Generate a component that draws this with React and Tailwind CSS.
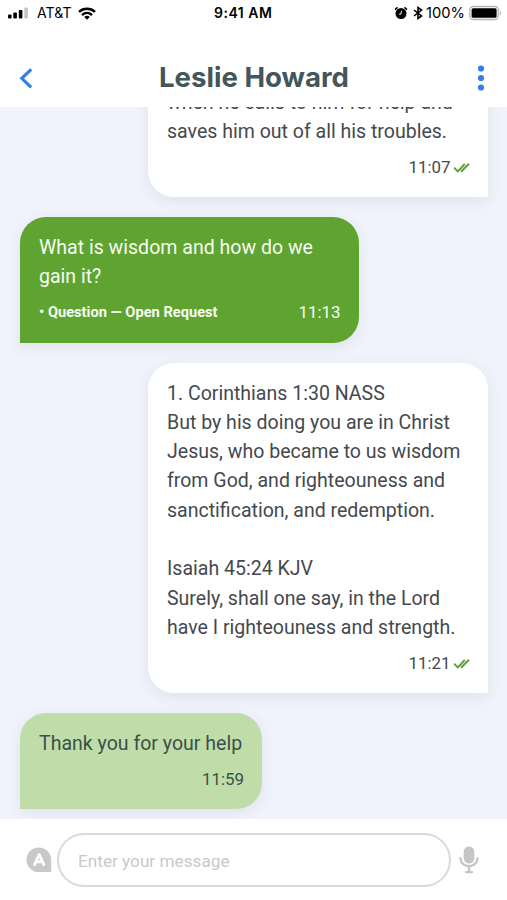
function StatusBar() {
  return (
    <div className="flex h-[26px] shrink-0 items-center font-['Inter','Liberation_Sans',sans-serif] text-black">
      <div className="flex w-[214px] items-center pl-[8px]">
        <svg className="h-[12px] w-[21px]" viewBox="0 0 21 12">
          <rect x="0" y="7.500" width="3.600" height="4" rx="1" />
          <rect x="5.300" y="5.500" width="3.600" height="6" rx="1" />
          <rect x="10.800" y="3" width="3.600" height="8.500" rx="1" />
          <rect x="16.300" y="0.500" width="3.600" height="11" rx="1" fill="#c4c4c4" />
        </svg>
        <span className="ml-[8px] w-[37px] whitespace-nowrap text-[14px] leading-none tracking-[0.100px]">AT&amp;T</span>
        <svg className="ml-[4px] h-[13px] w-[18px]" viewBox="0 0 18 13">
          <g fill="none" stroke="#000" strokeWidth="2.500">
            <path d="M1 4.800C5.500.600 12.500.600 17 4.800" />
            <path d="M4 8.100c2.900-2.700 7.100-2.700 10 0" />
          </g>
          <path d="M6.200 9.900c1.700-1.400 3.900-1.400 5.600 0L9 12.800z" />
        </svg>
      </div>
      <span className="w-[62px] whitespace-nowrap text-[14px] font-semibold leading-none tracking-[0.500px]">9:41 AM</span>
      <div className="ml-auto flex items-center pr-[5px]">
        <svg className="h-[14px] w-[14px]" viewBox="0 0 14 14">
          <circle cx="7" cy="7.500" r="5.500" />
          <path d="M1 3.600 3.500 1.400M13 3.600 10.500 1.400" stroke="#000" strokeWidth="1.500" />
          <path d="M7.600 4.800 6.800 8.200H5" fill="none" stroke="#fff" strokeWidth="1" />
        </svg>
        <svg className="ml-[5px] h-[14px] w-[10px]" viewBox="0 0 10 14" fill="none" stroke="#000" strokeWidth="1.600">
          <path d="M1 4l7.500 6L5 12.500V1.500L8.500 4 1 10" />
        </svg>
        <span className="ml-[3px] w-[39px] whitespace-nowrap pt-[1px] text-[14.700px] leading-none">100%</span>
        <svg className="ml-[4px] h-[16px] w-[33px]" viewBox="0 0 33 16">
          <rect x="0.800" y="1.500" width="28.500" height="13" rx="3.500" fill="#fff" stroke="#b5b5b5" strokeWidth="1.300" />
          <rect x="2.600" y="3.300" width="25" height="9.400" rx="1.500" />
          <path d="M30.800 5.500c1.600.6 1.600 4.400 0 5z" fill="#b5b5b5" />
        </svg>
      </div>
    </div>
  );
}

function Header() {
  return (
    <header className="flex h-[81px] shrink-0 items-center bg-white pb-[1px] pt-[23px]">
      <svg className="ml-[18px] h-[24px] w-[16px]" viewBox="0 0 16 24" fill="none" stroke="#2f80ed" strokeWidth="3.200">
        <path d="M13.200 3.300 3.800 12.300l9.400 9" />
      </svg>
      <h1 className="flex-1 whitespace-nowrap pl-[125px] font-['Inter','Liberation_Sans',sans-serif] text-[27.600px] font-bold leading-none text-[#43565b]">
        Leslie Howard
      </h1>
      <svg className="mr-[21px] h-[28px] w-[10px]" viewBox="0 0 10 28" fill="#2f80ed">
        <circle cx="5" cy="4.500" r="3.100" />
        <circle cx="5" cy="14" r="3.100" />
        <circle cx="5" cy="23.500" r="3.100" />
      </svg>
    </header>
  );
}

function ReadTicks() {
  return (
    <svg className="ml-[2px] h-[12px] w-[17px]" viewBox="0 0 17 12" fill="none" stroke="#5ea532" strokeWidth="2">
      <path d="M1.200 5.800 4.800 9.400 11.800 2M8 9.800 16 1.800" />
    </svg>
  );
}

function Bubble({ lines, className, time, tag, read }) {
  return (
    <article className={"flex shrink-0 flex-col pl-[19px] pt-[15.500px] shadow-[0_4px_14px_rgba(60,70,90,0.09)] " + className}>
      {lines.map((line, i) => (
        <p key={i} className="h-[29.300px] whitespace-nowrap text-[19.550px] leading-[29.300px]">{line}</p>
      ))}
      <div className="mt-[10.700px] flex h-[22px] items-center">
        {tag && <span className="whitespace-nowrap pt-[1px] text-[14.650px] font-bold">{tag}</span>}
        <time className="ml-auto text-[16.900px]">{time}</time>
        {read && <ReadTicks />}
      </div>
    </article>
  );
}

function Composer() {
  return (
    <footer className="flex h-[81px] shrink-0 items-start bg-white pt-[14px]">
      <svg className="ml-[26px] mt-[14px] h-[26px] w-[26px]" viewBox="0 0 26 26">
        <path d="M12.800.5a12.300 12.300 0 0 0 0 24.600H25.200V12.800A12.300 12.300 0 0 0 12.800.5z" fill="#c8c8cb" />
        <path d="M8.600 17.500 13.200 7.500l4.600 10M10.300 14.800h5.800" fill="none" stroke="#fff" strokeWidth="2.900" strokeLinecap="round" strokeLinejoin="round" />
      </svg>
      <div className="ml-[5px] flex h-[54px] w-[394px] items-center rounded-full border-2 border-[#dadada] pl-[19px] pt-[3px]">
        <span className="whitespace-nowrap text-[17.200px] text-[#c9c9c9]">Enter your message</span>
      </div>
      <svg className="ml-[8px] mt-[13px] h-[28px] w-[20px]" viewBox="0 0 20 28">
        <rect x="4.700" y="0.500" width="10.600" height="17" rx="5.300" fill="#c5c5c8" />
        <path d="M1.500 12C1.500 22.800 18.500 22.800 18.500 12M10 20v6M7 26.200h6" fill="none" stroke="#c5c5c8" strokeWidth="2.200" strokeLinecap="round" />
      </svg>
    </footer>
  );
}

export default function App() {
  return (
    <div className="flex h-[900px] w-[507px] flex-col overflow-hidden bg-white font-['Roboto','Liberation_Sans',sans-serif]">
      <StatusBar />
      <Header />
      <main className="flex h-[712px] shrink-0 flex-col justify-end gap-[20px] overflow-hidden bg-[#f0f3fb] pb-[10px]">
        <Bubble
          className="h-[125px] w-[340px] ml-[148px] pr-[18.500px] rounded-[26px] rounded-br-none bg-white text-[#45494d]"
          lines={["when he calls to him for help and", "saves him out of all his troubles."]}
          time="11:07"
          read
        />
        <Bubble
          className="h-[126px] w-[339px] ml-[20px] pr-[18.500px] rounded-[26px] rounded-bl-none bg-[#5fa430] text-[#f6fbf2]"
          lines={["What is wisdom and how do we", "gain it?"]}
          time="11:13"
          tag="• Question — Open Request"
        />
        <Bubble
          className="h-[330px] w-[340px] ml-[148px] pr-[18.500px] rounded-[26px] rounded-br-none bg-white text-[#45494d]"
          lines={[
            "1. Corinthians 1:30 NASS",
            "But by his doing you are in Christ",
            "Jesus, who became to us wisdom",
            "from God, and righteouness and",
            "sanctification, and redemption.",
            "",
            "Isaiah 45:24 KJV",
            "Surely, shall one say, in the Lord",
            "have I righteouness and strength.",
          ]}
          time="11:21"
          read
        />
        <Bubble
          className="h-[96px] w-[242px] ml-[20px] pr-[18px] rounded-[26px] rounded-bl-none bg-[#c0dda9] text-[#3a504b]"
          lines={["Thank you for your help"]}
          time="11:59"
        />
      </main>
      <Composer />
    </div>
  );
}
